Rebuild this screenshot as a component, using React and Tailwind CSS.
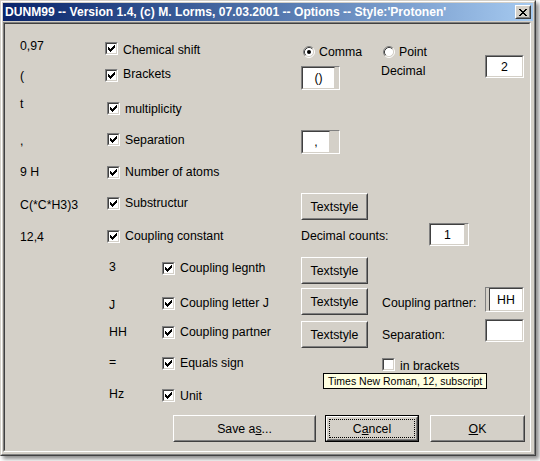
import React from "react";

const Check = ({ on = true }) => (
  <div className="w-[13px] h-[13px] shrink-0 border border-t-[#808080] border-l-[#808080] border-b-white border-r-white">
    <div className="w-full h-full border border-t-[#404040] border-l-[#404040] border-b-[#d4d0c8] border-r-[#d4d0c8] bg-white">
      {on && (
        <svg width="9" height="9" viewBox="0 0 9 9" shapeRendering="crispEdges" className="block">
          {[2, 3, 4, 3, 2, 1, 0].map((s, i) => (
            <rect key={i} x={1 + i} y={1 + s} width="1" height="3" fill="#000" />
          ))}
        </svg>
      )}
    </div>
  </div>
);

const CB = ({ label, off = "", on = true }) => (
  <div className="flex items-start gap-[5px]">
    <Check on={on} />
    <span className={"leading-[14px] whitespace-nowrap " + off}>{label}</span>
  </div>
);

const Radio = ({ on = false, label }) => (
  <div className="flex items-center gap-[4px]">
    <svg width="12" height="12" viewBox="0 0 12 12" className="block shrink-0">
      <circle cx="6" cy="6" r="4.5" fill="#fff" />
      <path d="M2.11 9.89 A5.5 5.5 0 0 1 9.89 2.11" stroke="#808080" fill="none" />
      <path d="M9.89 2.11 A5.5 5.5 0 0 1 2.11 9.89" stroke="#ffffff" fill="none" />
      <path d="M2.82 9.18 A4.5 4.5 0 0 1 9.18 2.82" stroke="#404040" fill="none" />
      <path d="M9.18 2.82 A4.5 4.5 0 0 1 2.82 9.18" stroke="#d4d0c8" fill="none" />
      {on && <circle cx="6" cy="6" r="2" fill="#000" />}
    </svg>
    <span className="leading-[14px] whitespace-nowrap">{label}</span>
  </div>
);

const TB = ({ className = "", children }) => (
  <div className={"shrink-0 border border-t-[#808080] border-l-[#808080] border-b-white border-r-white " + className}>
    <div className="w-full h-full border border-t-[#404040] border-l-[#404040] border-b-[#d4d0c8] border-r-[#d4d0c8] bg-white flex items-center justify-center leading-[14px]">
      {children}
    </div>
  </div>
);

const Btn = ({ className = "", children }) => (
  <div className={"shrink-0 border border-t-white border-l-white border-b-[#404040] border-r-[#404040] bg-[#d4d0c8] " + className}>
    <div className="w-full h-full border border-t-[#d4d0c8] border-l-[#d4d0c8] border-b-[#808080] border-r-[#808080] flex items-center justify-center leading-[14px] whitespace-nowrap">
      {children}
    </div>
  </div>
);

const T = ({ children }) => <div className="leading-[14px] whitespace-nowrap">{children}</div>;

const CloseGlyph = () => {
  const rows = ["XX....XX", ".XX..XX.", "..XXXX..", "...XX...", "..XXXX..", ".XX..XX.", "XX....XX"];
  return (
    <svg width="8" height="7" viewBox="0 0 8 7" shapeRendering="crispEdges" className="block">
      {rows.flatMap((r, y) =>
        r.split("").map((c, x) => (c === "X" ? <rect key={x + "-" + y} x={x} y={y} width="1" height="1" fill="#000" /> : null))
      )}
    </svg>
  );
};

export default function App() {
  return (
    <div className="w-[540px] h-[461px] bg-white overflow-hidden font-['Liberation_Sans',Arial,sans-serif] text-[12.3px] text-black">
      <div className="w-[536px] h-[456px] bg-[#d4d0c8] border border-t-[#d4d0c8] border-l-[#d4d0c8] border-b-[#404040] border-r-[#404040] shadow-[3px_3px_4px_rgba(0,0,0,0.45)]">
        <div className="w-full h-full border border-t-white border-l-white border-b-[#808080] border-r-[#808080] p-[1px] flex flex-col">
          {/* Title bar */}
          <div className="h-[18px] shrink-0 bg-linear-to-r from-[#0a246a] to-[#a6caf0] flex items-center pl-[2px] pr-[2px]">
            <span className="text-white font-bold text-[12.1px] leading-[14px] whitespace-nowrap flex-1">
              DUNM99 -- Version 1.4, (c) M. Lorms, 07.03.2001 -- Options -- Style:'Protonen'
            </span>
            <div className="w-[16px] h-[14px] border border-t-white border-l-white border-b-[#404040] border-r-[#404040] bg-[#d4d0c8]">
              <div className="w-full h-full border border-t-[#d4d0c8] border-l-[#d4d0c8] border-b-[#808080] border-r-[#808080] flex items-center justify-center">
                <CloseGlyph />
              </div>
            </div>
          </div>

          {/* Client area */}
          <div className="mt-[1px] mr-[2px] h-[430px] border border-t-[#808080] border-l-[#808080] border-b-white border-r-white">
            <div className="w-full h-full border border-t-[#404040] border-l-[#404040] border-b-[#d4d0c8] border-r-[#d4d0c8] relative flex flex-col pt-[14px]">
              {/* R1 */}
              <div className="h-[27px] shrink-0 flex items-start">
                <div className="w-[100px] shrink-0 pl-[15px] mt-[1px]"><T>0,97</T></div>
                <div className="w-[196px] shrink-0 mt-[4px]"><CB label="Chemical shift" off="mt-[1px]" /></div>
                <div className="w-[81px] shrink-0 pl-[2px] mt-[7px]"><Radio on label="Comma" /></div>
                <div className="w-[103px] shrink-0 pl-[1px] mt-[7px]"><Radio label="Point" /></div>
                <div className="shrink-0 mt-[17px]"><TB className="w-[39px] h-[23px]">2</TB></div>
              </div>
              {/* R2 */}
              <div className="h-[30px] shrink-0 flex items-start">
                <div className="w-[100px] shrink-0 pl-[15px] mt-[4px]"><T>(</T></div>
                <div className="w-[196px] shrink-0 mt-[4px]"><CB label="Brackets" off="-mt-[2px]" /></div>
                <div className="w-[81px] shrink-0 mt-[1px]"><TB className="w-[39px] h-[24px] pr-[4px]">()</TB></div>
                <div className="w-[103px] shrink-0 -ml-[1px] -mt-[1px]"><T>Decimal</T></div>
              </div>
              {/* R3 */}
              <div className="h-[34px] shrink-0 flex items-start">
                <div className="w-[100px] shrink-0 pl-[15px] mt-[2px]"><T>t</T></div>
                <div className="w-[196px] shrink-0 pl-[2px] mt-[7px]"><CB label="multiplicity" /></div>
              </div>
              {/* R4 */}
              <div className="h-[33px] shrink-0 flex items-start">
                <div className="w-[100px] shrink-0 pl-[15px] mt-[5px]"><T>,</T></div>
                <div className="w-[196px] shrink-0 pl-[2px] mt-[4px]"><CB label="Separation" /></div>
                <div className="w-[81px] shrink-0 mt-[1px]"><TB className="w-[39px] h-[24px] pr-[9px]">,</TB></div>
              </div>
              {/* R5 */}
              <div className="h-[31px] shrink-0 flex items-start">
                <div className="w-[100px] shrink-0 pl-[15px] mt-[3px]"><T>9 H</T></div>
                <div className="w-[196px] shrink-0 pl-[2px] mt-[4px]"><CB label="Number of atoms" off="-mt-[1px]" /></div>
              </div>
              {/* R6 */}
              <div className="h-[30px] shrink-0 flex items-start">
                <div className="w-[100px] shrink-0 pl-[15px] mt-[5px]"><T>C(*C*H3)3</T></div>
                <div className="w-[196px] shrink-0 pl-[2px] mt-[4px]"><CB label="Substructur" off="-mt-[1px]" /></div>
                <div className="w-[81px] shrink-0"><Btn className="w-[67px] h-[27px]">Textstyle</Btn></div>
              </div>
              {/* R7 */}
              <div className="h-[34px] shrink-0 flex items-start">
                <div className="w-[100px] shrink-0 pl-[15px] mt-[7px]"><T>12,4</T></div>
                <div className="w-[196px] shrink-0 pl-[2px] mt-[7px]"><CB label="Coupling constant" off="-mt-[1px]" /></div>
                <div className="w-[128px] shrink-0 mt-[6px]"><T>Decimal counts:</T></div>
                <div className="shrink-0"><TB className="w-[40px] h-[23px] pr-[3px]">1</TB></div>
              </div>
              {/* R8 */}
              <div className="h-[30px] shrink-0 flex items-start">
                <div className="w-[157px] shrink-0 pl-[104px] mt-[3px]"><T>3</T></div>
                <div className="w-[139px] shrink-0 mt-[5px]"><CB label="Coupling legnth" off="-mt-[1px]" /></div>
                <div className="w-[81px] shrink-0"><Btn className="w-[67px] h-[27px]">Textstyle</Btn></div>
              </div>
              {/* R9 */}
              <div className="h-[30px] shrink-0 flex items-start">
                <div className="w-[157px] shrink-0 pl-[104px] mt-[11px]"><T>J</T></div>
                <div className="w-[139px] shrink-0 mt-[10px]"><CB label="Coupling letter J" off="-mt-[1px]" /></div>
                <div className="w-[81px] shrink-0 mt-[1px]"><Btn className="w-[67px] h-[27px]">Textstyle</Btn></div>
                <div className="w-[103px] shrink-0 mt-[9px]"><T>Coupling partner:</T></div>
                <div className="shrink-0"><TB className="w-[39px] h-[25px] pl-[3px]">HH</TB></div>
              </div>
              {/* R10 */}
              <div className="h-[34px] shrink-0 flex items-start">
                <div className="w-[157px] shrink-0 pl-[104px] mt-[8px]"><T>HH</T></div>
                <div className="w-[139px] shrink-0 mt-[9px]"><CB label="Coupling partner" off="-mt-[1px]" /></div>
                <div className="w-[81px] shrink-0 mt-[4px]"><Btn className="w-[67px] h-[27px]">Textstyle</Btn></div>
                <div className="w-[103px] shrink-0 mt-[11px]"><T>Separation:</T></div>
                <div className="shrink-0 mt-[2px]"><TB className="w-[39px] h-[23px]"></TB></div>
              </div>
              {/* R11 */}
              <div className="h-[32px] shrink-0 flex items-start">
                <div className="w-[157px] shrink-0 pl-[104px] mt-[4px]"><T>=</T></div>
                <div className="w-[139px] shrink-0 mt-[6px]"><CB label="Equals sign" off="-mt-[1px]" /></div>
                <div className="w-[81px] shrink-0"></div>
                <div className="w-[103px] shrink-0 mt-[7px]"><CB on={false} label="in brackets" off="mt-[1px]" /></div>
              </div>
              {/* R12 */}
              <div className="h-[32px] shrink-0 flex items-start">
                <div className="w-[157px] shrink-0 pl-[104px] mt-[4px]"><T>Hz</T></div>
                <div className="w-[139px] shrink-0 mt-[6px]"><CB label="Unit" /></div>
              </div>
              {/* Buttons */}
              <div className="h-[27px] shrink-0 flex items-start">
                <div className="w-[168px] shrink-0"></div>
                <Btn className="w-[143px] h-[27px]">
                  <span>Save a<span className="underline">s</span>...</span>
                </Btn>
                <div className="w-[9px] shrink-0"></div>
                <div className="w-[94px] h-[27px] shrink-0 border border-black">
                  <Btn className="w-full h-full">
                    <div className="w-[86px] h-[19px] border border-dotted border-black flex items-center justify-center">
                      <span>C<span className="underline">a</span>ncel</span>
                    </div>
                  </Btn>
                </div>
                <div className="w-[11px] shrink-0"></div>
                <Btn className="w-[95px] h-[27px]">
                  <span><span className="underline">O</span>K</span>
                </Btn>
              </div>

              {/* Tooltip */}
              <div className="absolute left-[318px] top-[349px] w-[164px] h-[16px] border border-black bg-[#ffffe1] pl-[4px] flex items-center text-[10.5px] leading-[12px] whitespace-nowrap">
                Times New Roman, 12, subscript
              </div>
            </div>
          </div>
        </div>
      </div>
    </div>
  );
}
